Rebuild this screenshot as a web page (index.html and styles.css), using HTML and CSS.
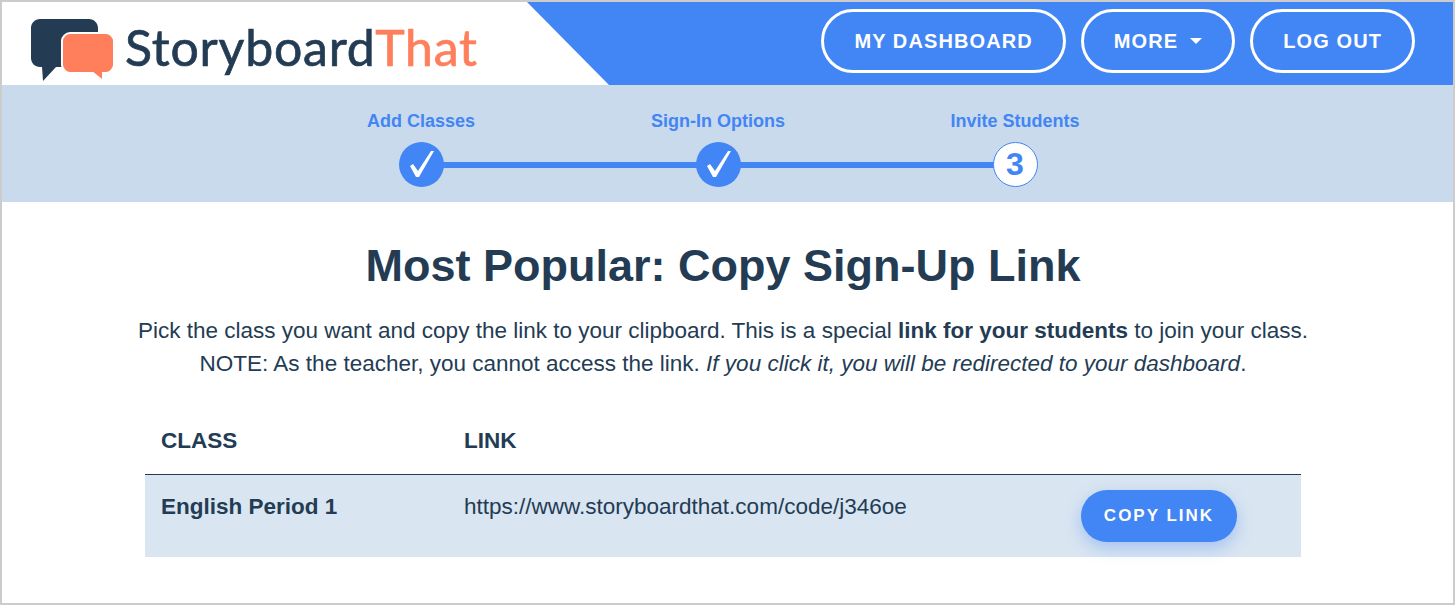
FILE: index.html
```html
<!DOCTYPE html>
<html lang="en">
<head>
  <meta charset="UTF-8" />
  <title>Invite Students</title>
  <link rel="stylesheet" href="styles.css">
</head>
<body>
  <div class="header">
    <div class="logo-area">
      <svg class="logo-icon" width="83" height="62" viewBox="0 0 83 62">
        <path class="bubble-dark" d="M9 0H58C63 0 67 4 67 9V39C67 44 63 48 58 48H25L12 62L11 48H9C4 48 0 44 0 39V9C0 4 4 0 9 0Z"/>
        <path class="bubble-orange" d="M39 14H75C79 14 83 18 83 22V46C83 50 79 54 75 54H72V62L62 54H39C35 54 31 50 31 46V22C31 18 35 14 39 14Z"/>
      </svg>
      <span class="logo-text">Storyboard<span class="logo-that">That</span></span>
    </div>
    <div class="nav">
      <a href="#" class="nav-btn">MY DASHBOARD</a>
      <a href="#" class="nav-btn">MORE <span class="caret"></span></a>
      <a href="#" class="nav-btn">LOG OUT</a>
    </div>
  </div>

  <div class="steps-band">
    <div class="steps">
      <div class="step">
        <div class="step-label">Add Classes</div>
        <div class="step-circle done">
          <svg width="45" height="45" viewBox="0 0 45 45"><path d="M11 24L14 22L19 29L32 9L35 9L20 35L17 35Z"/></svg>
        </div>
      </div>
      <div class="step">
        <div class="step-label">Sign-In Options</div>
        <div class="step-circle done">
          <svg width="45" height="45" viewBox="0 0 45 45"><path d="M11 24L14 22L19 29L32 9L35 9L20 35L17 35Z"/></svg>
        </div>
      </div>
      <div class="step">
        <div class="step-label">Invite Students</div>
        <div class="step-circle current">3</div>
      </div>
    </div>
  </div>

  <div class="main-content">
    <h1>Most Popular: Copy Sign-Up Link</h1>
    <p>Pick the class you want and copy the link to your clipboard. This is a special <b>link for your students</b> to join your class.<br>
    NOTE: As the teacher, you cannot access the link. <i>If you click it, you will be redirected to your dashboard</i>.</p>

    <table class="link-table">
      <thead>
        <tr>
          <th class="col-class">CLASS</th>
          <th class="col-link">LINK</th>
          <th class="col-action"></th>
        </tr>
      </thead>
      <tbody>
        <tr>
          <td><b>English Period 1</b></td>
          <td>https://www.storyboardthat.com/code/j346oe</td>
          <td><button class="copy-btn">COPY LINK</button></td>
        </tr>
      </tbody>
    </table>
  </div>
</body>
</html>
```

FILE: styles.css
```css
* {
  margin: 0;
  padding: 0;
  box-sizing: border-box;
}

html, body {
  height: 100%;
}

body {
  font-family: "Liberation Sans", Arial, sans-serif;
  color: #233c54;
  background-color: #fff;
  border: 2px solid #ccc;
  overflow: hidden;
}

/* Header */
.header {
  display: flex;
  justify-content: space-between;
  align-items: center;
  height: 83px;
  background-color: #4285f4;
}

.logo-area {
  display: flex;
  align-items: flex-start;
  gap: 11px;
  width: 607px;
  height: 100%;
  padding: 17px 0 0 29px;
  background-color: #fff;
  clip-path: polygon(0 0, 525px 0, 100% 100%, 0 100%);
}

.logo-icon {
  flex-shrink: 0;
  overflow: visible;
}

.bubble-dark {
  fill: #233c54;
}

.bubble-orange {
  fill: #ff7f5c;
  stroke: #fff;
  stroke-width: 2;
}

.logo-text {
  font-family: Lato, sans-serif;
  font-size: 50px;
  line-height: 57px;
  letter-spacing: 0.8px;
  color: #233c54;
  -webkit-text-stroke: 0.7px;
}

.logo-that {
  color: #ff7f5c;
}

.nav {
  display: flex;
  gap: 15px;
  padding: 0 38px 5px 0;
}

.nav-btn {
  display: flex;
  align-items: center;
  height: 64px;
  padding: 0 30px;
  border: 3px solid #fff;
  border-radius: 32px;
  color: #fff;
  font-size: 20px;
  font-weight: bold;
  letter-spacing: 1.1px;
  text-decoration: none;
}

.caret {
  width: 0;
  height: 0;
  margin-left: 12px;
  border-top: 6px solid #fff;
  border-left: 6px solid transparent;
  border-right: 6px solid transparent;
}

/* Steps */
.steps-band {
  height: 117px;
  padding-top: 26px;
  background-color: #c9daed;
}

.steps {
  display: flex;
  justify-content: center;
  padding-right: 19px;
}

.step {
  position: relative;
  display: flex;
  flex-direction: column;
  align-items: center;
  width: 297px;
}

.step:not(:last-child)::after {
  content: "";
  position: absolute;
  left: 50%;
  top: 51px;
  width: 100%;
  height: 6px;
  background-color: #4285f4;
}

.step-label {
  height: 31px;
  font-size: 18px;
  font-weight: bold;
  line-height: 21px;
  color: #4285f4;
}

.step-circle {
  position: relative;
  z-index: 1;
  display: flex;
  align-items: center;
  justify-content: center;
  width: 45px;
  height: 45px;
  border-radius: 50%;
  font-size: 32px;
  font-weight: bold;
}

.step-circle.done {
  background-color: #4285f4;
  fill: #fff;
}

.step-circle.current {
  background-color: #fff;
  border: 1px solid #4285f4;
  color: #4285f4;
}

/* Main */
.main-content {
  padding: 36px 9px 0 0;
  text-align: center;
}

h1 {
  font-size: 45px;
  line-height: 56px;
  margin-bottom: 20px;
}

p {
  font-size: 22.5px;
  line-height: 33px;
}

.link-table {
  width: 1156px;
  margin: 29px auto 0;
  border-collapse: collapse;
  table-layout: fixed;
  text-align: left;
  font-size: 22.5px;
}

.link-table th {
  height: 65px;
  padding: 0 16px;
  border-bottom: 1px solid #233c54;
}

.col-class {
  width: 303px;
}

.col-action {
  width: 236px;
}

.link-table td {
  height: 82px;
  padding: 15px 16px;
  background-color: #d9e5f1;
  vertical-align: top;
  line-height: 33px;
}

.copy-btn {
  width: 156px;
  height: 52px;
  border: none;
  border-radius: 26px;
  background-color: #4285f4;
  color: #fff;
  font-family: "Liberation Sans", Arial, sans-serif;
  font-size: 17px;
  font-weight: bold;
  letter-spacing: 2px;
  box-shadow: 0 6px 16px rgba(66, 133, 244, 0.35);
  cursor: pointer;
}
```
